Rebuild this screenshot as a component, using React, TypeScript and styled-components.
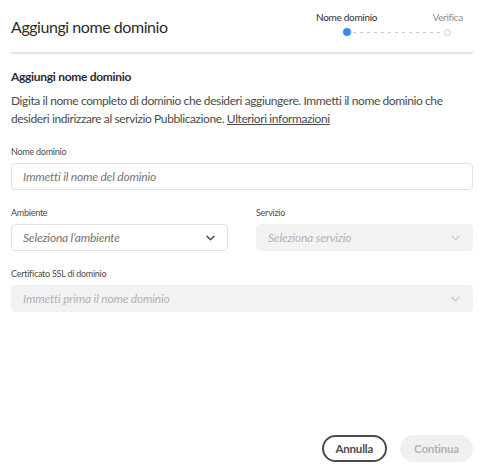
import React from "react";
import styled, { createGlobalStyle } from "styled-components";

const Global = createGlobalStyle`
  html, body { margin: 0; padding: 0; background: #ffffff; }
  body { font-family: Lato, "Open Sans", sans-serif; color: #2c2c2c; }
  * { box-sizing: border-box; }
`;

const Dialog = styled.div`
  height: 100vh;
  display: flex;
  flex-direction: column;
  padding: 0 25px 12px 11px;
`;

const Header = styled.header`
  height: 54px;
  display: flex;
  align-items: flex-start;
  justify-content: space-between;
  border-bottom: 2px solid #e3e3e3;
`;

const Title = styled.h1`
  margin: 0;
  line-height: 54px;
  font-size: 16px;
  letter-spacing: -0.45px;
  font-weight: 400;
  color: #2c2c2c;
`;

const Stepper = styled.div`
  margin-top: 10px;
  margin-right: 10px;
  width: 147px;
  display: flex;
  flex-direction: column;
`;

const StepLabels = styled.div`
  display: flex;
  justify-content: space-between;
  font-size: 10px;
  letter-spacing: -0.3px;
  line-height: 14px;
`;

const StepLabel = styled.span<{ $active?: boolean }>`
  color: ${(p) => (p.$active ? "#2c2c2c" : "#8e8e8e")};
`;

const StepTrack = styled.div`
  margin-top: 4px;
  height: 8px;
  display: flex;
  align-items: center;
  padding: 0 12px 0 27px;
`;

const Dot = styled.span<{ $active?: boolean }>`
  flex: none;
  width: ${(p) => (p.$active ? 8 : 7)}px;
  height: ${(p) => (p.$active ? 8 : 7)}px;
  border-radius: 50%;
  background: ${(p) => (p.$active ? "#378ef0" : "#fff")};
  border: ${(p) => (p.$active ? "none" : "1px solid #d0d0d0")};
`;

const Dashes = styled.span`
  flex: 1;
  height: 1px;
  margin: 0 2px;
  background-image: linear-gradient(to right, #cacaca 50%, transparent 50%);
  background-size: 7px 1px;
`;

const Body = styled.main`
  flex: 1;
  display: flex;
  flex-direction: column;
`;

const SectionTitle = styled.h2`
  margin: 14px 0 0;
  font-size: 12px;
  letter-spacing: -0.3px;
  line-height: 18px;
  font-weight: 700;
  color: #2c2c2c;
`;

const Text = styled.p`
  margin: 6px 0 0;
  font-size: 12px;
  letter-spacing: -0.4px;
  line-height: 18px;
  color: #4b4b4b;
`;

const Link = styled.a`
  color: #4b4b4b;
  text-decoration: underline;
`;

const Field = styled.div<{ $top: number }>`
  margin-top: ${(p) => p.$top}px;
  display: flex;
  flex-direction: column;
  min-width: 0;
`;

const Row = styled.div`
  margin-top: 16px;
  display: grid;
  grid-template-columns: 1fr 1fr;
  column-gap: 28px;
`;

const Label = styled.label`
  font-size: 9px;
  letter-spacing: -0.25px;
  line-height: 14px;
  color: #4b4b4b;
  margin-bottom: 4px;
`;

const Input = styled.input`
  height: 27px;
  width: 100%;
  border: 1px solid #e1e1e1;
  border-radius: 4px;
  padding: 0 11px;
  font-family: inherit;
  font-size: 12px;
  letter-spacing: -0.2px;
  outline: none;
  &::placeholder { color: #747474; font-style: italic; }
`;

const Select = styled.div<{ $disabled?: boolean }>`
  height: 27px;
  display: flex;
  align-items: center;
  justify-content: space-between;
  padding: 0 12px 0 11px;
  border-radius: 4px;
  border: 1px solid ${(p) => (p.$disabled ? "#f2f2f2" : "#e1e1e1")};
  background: ${(p) => (p.$disabled ? "#f2f2f2" : "#ffffff")};
  color: ${(p) => (p.$disabled ? "#b3b3b3" : "#747474")};
  font-size: 12px;
  letter-spacing: -0.2px;
  font-style: italic;
`;

const Chevron = ({ light }: { light?: boolean }) => (
  <svg width="9" height="6" viewBox="0 0 9 6" fill="none">
    <path
      d="M1 1.2l3.5 3.5 3.5-3.5"
      stroke={light ? "#cfcfcf" : "#4b4b4b"}
      strokeWidth="1.5"
      strokeLinecap="round"
      strokeLinejoin="round"
    />
  </svg>
);

const Footer = styled.footer`
  display: flex;
  justify-content: flex-end;
  gap: 13px;
`;

const Button = styled.button<{ $variant: "outline" | "disabled" }>`
  height: 27px;
  padding: 0 12px;
  border-radius: 14px;
  font-family: inherit;
  font-size: 11.5px;
  letter-spacing: -0.2px;
  font-weight: 700;
  border: 2px solid ${(p) => (p.$variant === "outline" ? "#4b4b4b" : "#f0f0f0")};
  background: ${(p) => (p.$variant === "outline" ? "#ffffff" : "#f0f0f0")};
  color: ${(p) => (p.$variant === "outline" ? "#4b4b4b" : "#b3b3b3")};
`;

export default function App() {
  return (
    <>
      <Global />
      <Dialog>
        <Header>
          <Title>Aggiungi nome dominio</Title>
          <Stepper>
            <StepLabels>
              <StepLabel $active>Nome dominio</StepLabel>
              <StepLabel>Verifica</StepLabel>
            </StepLabels>
            <StepTrack>
              <Dot $active />
              <Dashes />
              <Dot />
            </StepTrack>
          </Stepper>
        </Header>
        <Body>
          <SectionTitle>Aggiungi nome dominio</SectionTitle>
          <Text>
            Digita il nome completo di dominio che desideri aggiungere. Immetti il nome dominio che
            desideri indirizzare al servizio Pubblicazione. <Link href="#">Ulteriori informazioni</Link>
          </Text>
          <Field $top={17}>
            <Label>Nome dominio</Label>
            <Input placeholder="Immetti il nome del dominio" />
          </Field>
          <Row>
            <Field $top={0}>
              <Label>Ambiente</Label>
              <Select>
                <span>Seleziona l’ambiente</span>
                <Chevron />
              </Select>
            </Field>
            <Field $top={0}>
              <Label>Servizio</Label>
              <Select $disabled>
                <span>Seleziona servizio</span>
                <Chevron light />
              </Select>
            </Field>
          </Row>
          <Field $top={16}>
            <Label>Certificato SSL di dominio</Label>
            <Select $disabled>
              <span>Immetti prima il nome dominio</span>
              <Chevron light />
            </Select>
          </Field>
        </Body>
        <Footer>
          <Button $variant="outline">Annulla</Button>
          <Button $variant="disabled" disabled>Continua</Button>
        </Footer>
      </Dialog>
    </>
  );
}
